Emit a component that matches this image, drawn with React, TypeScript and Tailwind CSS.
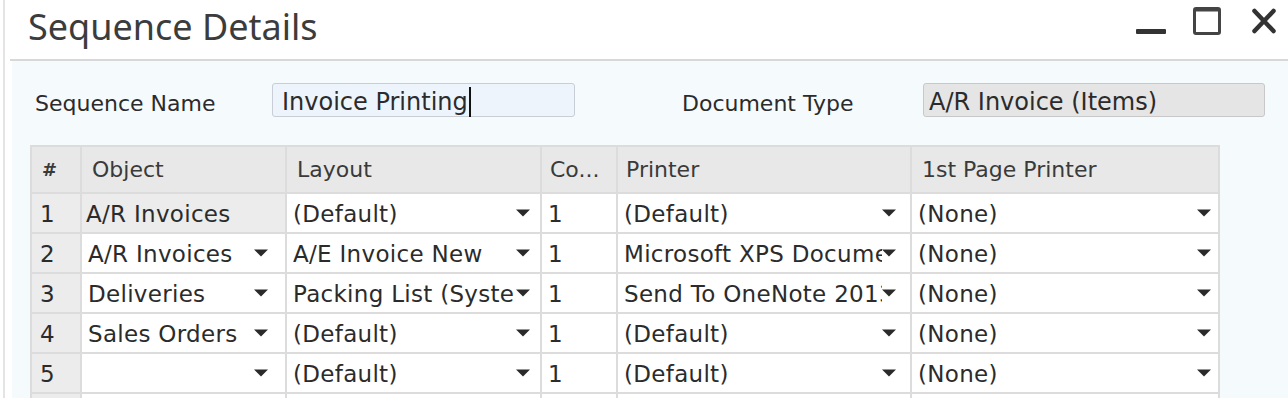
import React from "react"

type Row = {
  no: string
  object: string
  objectLocked?: boolean
  layout: string
  copies: string
  printer: string
  firstPage: string
}

const rows: Row[] = [
  { no: "1", object: "A/R Invoices", objectLocked: true, layout: "(Default)", copies: "1", printer: "(Default)", firstPage: "(None)" },
  { no: "2", object: "A/R Invoices", layout: "A/E Invoice New", copies: "1", printer: "Microsoft XPS Document Writer", firstPage: "(None)" },
  { no: "3", object: "Deliveries", layout: "Packing List (System)", copies: "1", printer: "Send To OneNote 2013", firstPage: "(None)" },
  { no: "4", object: "Sales Orders", layout: "(Default)", copies: "1", printer: "(Default)", firstPage: "(None)" },
  { no: "5", object: "", layout: "(Default)", copies: "1", printer: "(Default)", firstPage: "(None)" },
]

const Arrow = () => (
  <svg width="14" height="8" viewBox="0 0 14 8" className="shrink-0">
    <path d="M0 0.5 H14 L7 7.5 Z" fill="#2a2a2a" />
  </svg>
)

const cols = "grid grid-cols-[50px_205px_255px_76px_294px_308px]"
const cell = "h-full border-r-2 border-b-2 border-[#dcdcdc] flex items-center overflow-hidden"

const DropCell = ({ text, pr }: { text: string; pr: string }) => (
  <div className={`${cell} bg-white pl-[6px] ${pr}`}>
    <span className="flex-1 min-w-0 overflow-hidden whitespace-nowrap pt-[2px]">{text}</span>
    <Arrow />
  </div>
)

export default function App() {
  return (
    <div className="w-[1288px] h-[398px] overflow-hidden bg-white pl-[3px] text-[#2b2b2b]" style={{ fontFamily: "'DejaVu Sans', sans-serif" }}>
      <div className="h-full border-l-2 border-[#e4e4e4] flex flex-col">
        {/* title bar */}
        <div className="h-[59px] shrink-0 flex items-start justify-between pl-[23px] pr-[12px]">
          <div className="pt-[4px] text-[36px] leading-[46px] text-[#3c3c3c]" style={{ fontFamily: "'Noto Sans', sans-serif" }}>
            Sequence Details
          </div>
          <div className="flex items-start pt-[7px]">
            <svg width="30" height="28" viewBox="0 0 30 28">
              <rect x="0" y="22" width="30" height="5" rx="1" fill="#333" />
            </svg>
            <svg width="28" height="28" viewBox="0 0 28 28" className="ml-[27px]">
              <rect x="1.5" y="1.5" width="25" height="25" rx="1.5" fill="none" stroke="#444" strokeWidth="3" />
              <rect x="1.5" y="1.5" width="25" height="3" fill="#444" />
            </svg>
            <svg width="24" height="28" viewBox="0 0 24 28" className="ml-[31px]">
              <path d="M2.5 4 L21.5 24 M21.5 4 L2.5 24" stroke="#333" strokeWidth="4.5" strokeLinecap="round" />
            </svg>
          </div>
        </div>
        <div className="ml-[5px] h-[2px] shrink-0 bg-[#d8d8d8]" />

        {/* body */}
        <div className="flex-1 ml-[7px] bg-[#f5fafd] pl-[18px] pt-[22px] text-[22px]">
          <div className="flex items-center h-[34px]">
            <div className="w-[242px] pl-[5px] pt-[6px] whitespace-nowrap">Sequence Name</div>
            <div className="w-[303px] h-full border border-[#c9ced6] rounded-[3px] bg-[#eef4fc] flex items-center pl-[9px] pt-[3px] whitespace-nowrap text-[24px]">
              Invoice Printing
              <span className="inline-block w-[2px] h-[30px] bg-[#111] ml-[1px]" />
            </div>
            <div className="ml-[107px] w-[241px] pt-[6px] whitespace-nowrap">Document Type</div>
            <div className="w-[342px] h-full border border-[#c8c8c8] rounded-[3px] bg-[#e5e5e5] flex items-center pl-[5px] pt-[3px] whitespace-nowrap text-[24px]">
              A/R Invoice (Items)
            </div>
          </div>

          {/* grid */}
          <div className="mt-[28px] w-[1190px] border-t-2 border-l-2 border-[#dcdcdc]">
            <div className={`${cols} h-[47px] bg-[#e8e8e8] text-[#3a3a3a]`}>
              <div className={`${cell} pl-[10px] font-bold text-[18px]`}>#</div>
              <div className={`${cell} pl-[10px]`}>Object</div>
              <div className={`${cell} pl-[10px]`}>Layout</div>
              <div className={`${cell} pl-[8px]`}>Co...</div>
              <div className={`${cell} pl-[8px]`}>Printer</div>
              <div className={`${cell} pl-[10px]`}>1st Page Printer</div>
            </div>
            <div className="text-[23px] tracking-[0.3px]">
              {rows.map((r) => (
                <div key={r.no} className={`${cols} h-[40px]`}>
                  <div className={`${cell} bg-[#ececec] pl-[8px] pt-[2px]`}>{r.no}</div>
                  {r.objectLocked ? (
                    <div className={`${cell} bg-[#ececec] pl-[4px] pt-[2px] whitespace-nowrap`}>{r.object}</div>
                  ) : (
                    <DropCell text={r.object} pr="pr-[17px]" />
                  )}
                  <DropCell text={r.layout} pr="pr-[10px]" />
                  <div className={`${cell} bg-white pl-[6px] pt-[2px]`}>{r.copies}</div>
                  <DropCell text={r.printer} pr="pr-[14px]" />
                  <DropCell text={r.firstPage} pr="pr-[7px]" />
                </div>
              ))}
              <div className={`${cols} h-[40px]`}>
                <div className={`${cell} bg-[#ececec]`} />
                <div className={`${cell} bg-white`} />
                <div className={`${cell} bg-white`} />
                <div className={`${cell} bg-white`} />
                <div className={`${cell} bg-white`} />
                <div className={`${cell} bg-white`} />
              </div>
            </div>
          </div>
        </div>
      </div>
    </div>
  )
}
